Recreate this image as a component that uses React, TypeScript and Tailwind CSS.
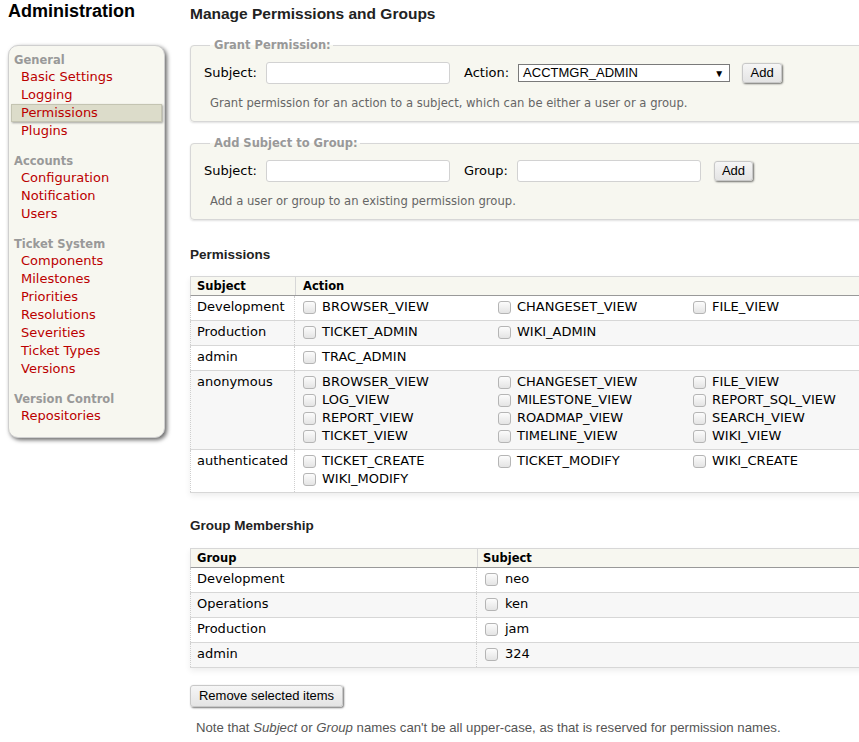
import React from 'react'

const sections = [
  { title: 'General', items: ['Basic Settings', 'Logging', 'Permissions', 'Plugins'] },
  { title: 'Accounts', items: ['Configuration', 'Notification', 'Users'] },
  {
    title: 'Ticket System',
    items: ['Components', 'Milestones', 'Priorities', 'Resolutions', 'Severities', 'Ticket Types', 'Versions'],
  },
  { title: 'Version Control', items: ['Repositories'] },
]

const perms = [
  { subject: 'Development', actions: ['BROWSER_VIEW', 'CHANGESET_VIEW', 'FILE_VIEW'] },
  { subject: 'Production', actions: ['TICKET_ADMIN', 'WIKI_ADMIN'] },
  { subject: 'admin', actions: ['TRAC_ADMIN'] },
  {
    subject: 'anonymous',
    actions: [
      'BROWSER_VIEW', 'CHANGESET_VIEW', 'FILE_VIEW',
      'LOG_VIEW', 'MILESTONE_VIEW', 'REPORT_SQL_VIEW',
      'REPORT_VIEW', 'ROADMAP_VIEW', 'SEARCH_VIEW',
      'TICKET_VIEW', 'TIMELINE_VIEW', 'WIKI_VIEW',
    ],
  },
  { subject: 'authenticated', actions: ['TICKET_CREATE', 'TICKET_MODIFY', 'WIKI_CREATE', 'WIKI_MODIFY'] },
]

const groups = [
  { group: 'Development', subject: 'neo' },
  { group: 'Operations', subject: 'ken' },
  { group: 'Production', subject: 'jam' },
  { group: 'admin', subject: '324' },
]

const Check = () => (
  <span className="inline-block w-[13px] h-[13px] shrink-0 rounded-[3px] border border-[#b5b5b5] bg-gradient-to-b from-[#fcfcfc] to-[#e4e4e4]" />
)

const Input = ({ w }: { w: string }) => (
  <span className={`inline-block h-[22px] ${w} rounded-[3px] border border-[#d2d2d2] bg-white`} />
)

const Button = ({ label, className = '' }: { label: string; className?: string }) => (
  <span
    className={`inline-flex items-center justify-center rounded-[3px] border border-[#c8c8c8] bg-gradient-to-b from-[#f6f6f6] to-[#e4e4e4] shadow-[1px_1px_2px_rgba(0,0,0,0.55)] font-['Liberation_Sans',Arial,sans-serif] text-[13px] text-black ${className}`}
  >
    {label}
  </span>
)

const Fieldset = ({ legend, children }: { legend: string; children: React.ReactNode }) => (
  <fieldset className="border border-[#d7d7d7] rounded-[4px] bg-[#f7f7f0] shadow-[0_1px_2px_rgba(0,0,0,0.12)] pl-[13px] pt-[4px] pb-[10px]">
    <legend className="ml-[6px] pl-[4px] pr-[2px] text-[11.5px] leading-[14px] font-bold text-[#999]">{legend}</legend>
    {children}
  </fieldset>
)

export default function App() {
  return (
    <div className="w-full min-h-[742px] overflow-hidden bg-white font-['DejaVu_Sans',Verdana,sans-serif] text-[13px] text-black">
      <div className="flex pl-[8px]">
        {/* left column */}
        <div className="w-[157px] shrink-0">
          <h1 className="font-['Liberation_Sans',Arial,sans-serif] font-bold text-[18px] leading-[22px]">Administration</h1>
          <div className="mt-[23px] rounded-[10px] border border-[#cfcfcf] bg-[#f7f7f0] shadow-[2px_2px_4px_rgba(0,0,0,0.6)] pt-[7px] pb-[12px]">
            {sections.map((s, i) => (
              <div key={s.title} className={i > 0 ? 'mt-[14px]' : ''}>
                <div className="pl-[5px] text-[11.5px] leading-[15px] font-bold text-[#999]">{s.title}</div>
                {s.items.map((item) => (
                  <div
                    key={item}
                    className={`mx-[2px] pl-[9px] h-[18px] leading-[16px] border ${
                      item === 'Permissions'
                        ? 'bg-[#dcdcca] border-[#c4c4b2] shadow-[1px_1px_2px_rgba(0,0,0,0.35)]'
                        : 'border-transparent'
                    } text-[#b00]`}
                  >
                    {item}
                  </div>
                ))}
              </div>
            ))}
          </div>
        </div>

        {/* main column */}
        <div className="ml-[25px] w-[700px] shrink-0">
          <h2 className="font-['Liberation_Sans',Arial,sans-serif] font-bold text-[15.5px] leading-[18px] mt-[5px] text-[#222]">
            Manage Permissions and Groups
          </h2>

          <div className="mt-[15px]">
            <Fieldset legend="Grant Permission:">
              <div className="flex items-center h-[22px] mt-[6px]">
                <span>Subject:</span>
                <Input w="w-[184px] ml-[9px]" />
                <span className="ml-[14px]">Action:</span>
                <span className="ml-[9px] flex items-center justify-between w-[212px] h-[18px] border border-[#7a7a7a] bg-white pl-[4px] pr-[5px] font-['Liberation_Sans',Arial,sans-serif] text-[13px]">
                  <span>ACCTMGR_ADMIN</span>
                  <span className="text-[10px]">▼</span>
                </span>
                <Button label="Add" className="ml-[12px] w-[40px] h-[20px]" />
              </div>
              <p className="mt-[11px] pl-[6px] text-[11.6px] leading-[16px] text-[#666]">
                Grant permission for an action to a subject, which can be either a user or a group.
              </p>
            </Fieldset>
          </div>

          <div className="mt-[14px]">
            <Fieldset legend="Add Subject to Group:">
              <div className="flex items-center h-[22px] mt-[6px]">
                <span>Subject:</span>
                <Input w="w-[184px] ml-[9px]" />
                <span className="ml-[14px]">Group:</span>
                <Input w="w-[184px] ml-[9px]" />
                <Button label="Add" className="ml-[13px] w-[39px] h-[20px]" />
              </div>
              <p className="mt-[11px] pl-[6px] text-[11.6px] leading-[16px] text-[#666]">
                Add a user or group to an existing permission group.
              </p>
            </Fieldset>
          </div>

          <h3 className="mt-[26px] font-['Liberation_Sans',Arial,sans-serif] font-bold text-[13.5px] leading-[18px] text-[#222]">
            Permissions
          </h3>
          <div className="mt-[12px] border-t border-[#d7d7d7] shadow-[0_3px_6px_rgba(0,0,0,0.07)]">
            <div className="flex h-[19px] bg-[#f7f7f0] border-b border-[#999] border-l border-l-[#d7d7d7] text-[11.5px] font-bold leading-[18px]">
              <div className="w-[105px] pl-[6px] border-r border-[#d7d7d7]">Subject</div>
              <div className="pl-[7px]">Action</div>
            </div>
            {perms.map((r, i) => (
              <div
                key={r.subject}
                className={`flex border-b border-[#d7d7d7] ${i % 2 === 1 ? 'bg-[#f7f7f7]' : 'bg-white'}`}
              >
                <div className="w-[105px] shrink-0 pl-[6px] pt-[2px] pb-[4px] leading-[18px] border-l border-r border-dotted border-[#cfcfcf]">
                  {r.subject}
                </div>
                <div className="grid grid-cols-[195px_195px_195px] pl-[8px] pt-[2px] pb-[4px]">
                  {r.actions.map((a) => (
                    <div key={a} className="flex items-center h-[18px]">
                      <Check />
                      <span className="ml-[6px]">{a}</span>
                    </div>
                  ))}
                </div>
              </div>
            ))}
          </div>

          <h3 className="mt-[24px] font-['Liberation_Sans',Arial,sans-serif] font-bold text-[13.5px] leading-[18px] text-[#222]">
            Group Membership
          </h3>
          <div className="mt-[13px] border-t border-[#d7d7d7] shadow-[0_3px_6px_rgba(0,0,0,0.07)]">
            <div className="flex h-[19px] bg-[#f7f7f0] border-b border-[#999] border-l border-l-[#d7d7d7] text-[11.5px] font-bold leading-[18px]">
              <div className="w-[287px] pl-[6px] border-r border-[#d7d7d7]">Group</div>
              <div className="pl-[5px]">Subject</div>
            </div>
            {groups.map((g, i) => (
              <div
                key={g.group}
                className={`flex border-b border-[#d7d7d7] ${i % 2 === 1 ? 'bg-[#f7f7f7]' : 'bg-white'}`}
              >
                <div className="w-[287px] shrink-0 pl-[6px] pt-[2px] pb-[4px] leading-[18px] border-l border-r border-dotted border-[#cfcfcf]">
                  {g.group}
                </div>
                <div className="flex items-center h-[24px] pl-[8px] pb-[2px]">
                  <Check />
                  <span className="ml-[7px]">{g.subject}</span>
                </div>
              </div>
            ))}
          </div>

          <div className="mt-[17px]">
            <Button label="Remove selected items" className="w-[153px] h-[22px]" />
          </div>
          <p className="mt-[13px] pl-[6px] font-['Liberation_Sans',Arial,sans-serif] text-[13.2px] leading-[16px] text-[#555]">
            Note that <em>Subject</em> or <em>Group</em> names can't be all upper-case, as that is reserved for
            permission names.
          </p>
        </div>
      </div>
    </div>
  )
}
